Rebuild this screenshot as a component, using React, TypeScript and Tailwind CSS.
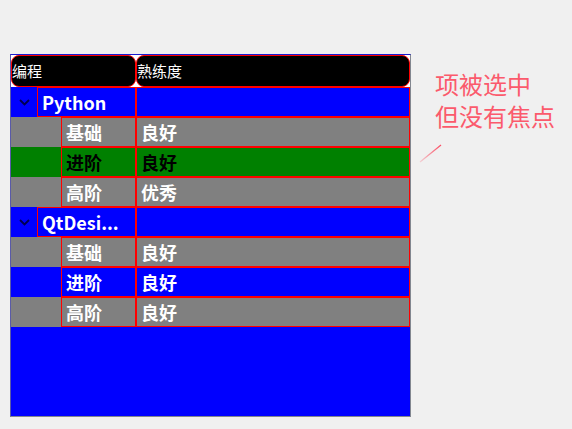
import React from 'react'

type Row = {
  level: 0 | 1
  name: string
  level2?: string
  bg: string
  text: string
}

const rows: Row[] = [
  { level: 0, name: 'Python', bg: 'bg-[#0000ff]', text: 'text-white' },
  { level: 1, name: '基础', level2: '良好', bg: 'bg-[#808080]', text: 'text-white' },
  { level: 1, name: '进阶', level2: '良好', bg: 'bg-[#008000]', text: 'text-black' },
  { level: 1, name: '高阶', level2: '优秀', bg: 'bg-[#808080]', text: 'text-white' },
  { level: 0, name: 'QtDesi...', bg: 'bg-[#0000ff]', text: 'text-white' },
  { level: 1, name: '基础', level2: '良好', bg: 'bg-[#808080]', text: 'text-white' },
  { level: 1, name: '进阶', level2: '良好', bg: 'bg-[#0000ff]', text: 'text-white' },
  { level: 1, name: '高阶', level2: '良好', bg: 'bg-[#808080]', text: 'text-white' },
]

function Chevron() {
  return (
    <svg width="11" height="7" viewBox="0 0 11 7" className="block">
      <polyline points="1,1 5.5,5.5 10,1" fill="none" stroke="#000050" strokeWidth="1.8" />
    </svg>
  )
}

function TreeRow({ row }: { row: Row }) {
  const top = row.level === 0
  return (
    <div className={`flex h-[30px] ${row.bg} ${row.text}`}>
      <div className={`${top ? 'w-[26px]' : 'w-[50px]'} flex items-center justify-center`}>
        {top && <Chevron />}
      </div>
      <div className={`${top ? 'w-[99px]' : 'w-[75px]'} flex items-center border border-[#ff0000] pl-[4px] text-[18px] font-bold whitespace-nowrap`}>
        {row.name}
      </div>
      <div className="flex flex-1 items-center border border-[#ff0000] pl-[4px] text-[18px] font-bold">
        {row.level2}
      </div>
    </div>
  )
}

export default function App() {
  return (
    <div
      className="relative h-[429px] w-[572px] bg-[#f0f0f0] pl-[10px] pt-[54px]"
      style={{ fontFamily: '"Noto Sans CJK SC", "Noto Sans", sans-serif' }}
    >
      <div className="flex h-[363px] w-[401px] flex-col border border-[#828790] border-t-[#1a1ad0] border-l-[#5a5aa8] bg-[#0000ff]">
        <div className="flex h-[32px] bg-white text-[15px] text-white">
          <div className="flex w-[125px] items-center rounded-[8px] border border-[#ff0000] bg-black pl-[0px]">编程</div>
          <div className="flex flex-1 items-center rounded-[8px] border border-[#ff0000] bg-black pl-[0px]">熟练度</div>
        </div>
        {rows.map((r, i) => (
          <TreeRow key={i} row={r} />
        ))}
      </div>

      <div className="absolute left-[435px] top-[68px] text-[24px] leading-[32px] text-[#fb5a6c]">
        <div>项被选中</div>
        <div>但没有焦点</div>
      </div>
      <svg className="absolute left-[418px] top-[143px]" width="26" height="22" viewBox="0 0 26 22">
        <defs>
          <linearGradient id="ln" x1="1" y1="0" x2="0" y2="1">
            <stop offset="0" stopColor="#fb4a60" />
            <stop offset="1" stopColor="#fb4a60" stopOpacity="0.2" />
          </linearGradient>
        </defs>
        <line x1="23" y1="2" x2="2" y2="19" stroke="url(#ln)" strokeWidth="1.2" />
      </svg>
    </div>
  )
}
